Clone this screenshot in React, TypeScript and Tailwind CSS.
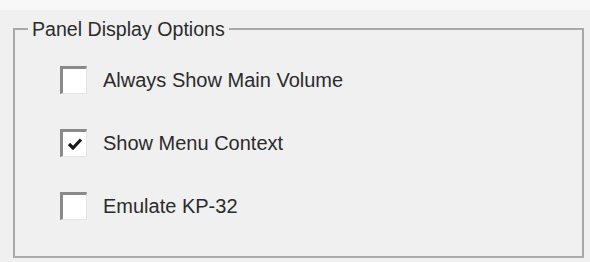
import React from 'react';

const options = [
  { label: 'Always Show Main Volume', checked: false },
  { label: 'Show Menu Context', checked: true },
  { label: 'Emulate KP-32', checked: false },
];

function CheckBox({ checked }: { checked: boolean }) {
  return (
    <span className="flex h-[28px] w-[27px] shrink-0 items-center justify-center border-t-[3px] border-l-[3px] border-r border-b border-t-[#8a8a8a] border-l-[#8a8a8a] border-r-[#e4e4e4] border-b-[#e4e4e4] bg-white">
      {checked && (
        <svg width="16" height="14" viewBox="0 0 16 14">
          <path d="M2 7 L6 11 L14 2.5" fill="none" stroke="#1a1a1a" strokeWidth="3.2" />
        </svg>
      )}
    </span>
  );
}

export default function App() {
  return (
    <div
      className="flex h-[262px] w-[590px] flex-col bg-[#f0f0f0] text-[#2b2b2b]"
      style={{ fontFamily: '"Liberation Sans", Arial, sans-serif' }}
    >
      <div className="h-[10px] bg-[#f8f8f8]" />
      <div className="pl-[13px] pr-[6px] pt-[8px]">
        <fieldset className="h-[240px] border-2 border-[#a9a9a9]">
          <legend className="ml-[13px] px-[4px] text-[19.6px] leading-[22px]">Panel Display Options</legend>
          <div className="flex flex-col gap-[35px] pl-[45px] pt-[26px]">
            {options.map((o) => (
              <label key={o.label} className="flex items-center gap-[16px] text-[20px] leading-[28px]">
                <CheckBox checked={o.checked} />
                <span>{o.label}</span>
              </label>
            ))}
          </div>
        </fieldset>
      </div>
    </div>
  );
}
